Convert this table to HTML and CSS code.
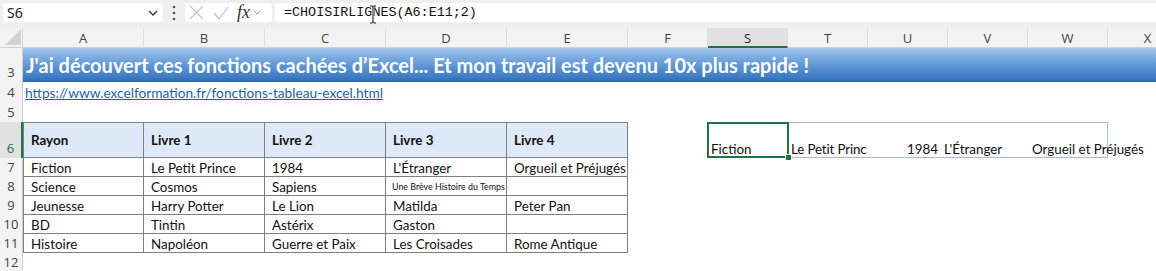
FILE: index.html
```html
<!DOCTYPE html>
<html lang="fr">
<head>
<meta charset="utf-8">
<title>Excel – CHOISIRLIGNES</title>
<link rel="stylesheet" href="styles.css">
</head>
<body>
<div class="fbar">
  <div class="namebox">
    <span class="nb-text">S6</span>
    <svg class="chev" width="10" height="6" viewBox="0 0 10 6"><path d="M1 1 L5 5 L9 1" fill="none" stroke="#333" stroke-width="1.3"/></svg>
  </div>
  <div class="dots">
    <svg width="4" height="16" viewBox="0 0 4 16"><circle cx="2" cy="2" r="1.3" fill="#555"/><circle cx="2" cy="8" r="1.3" fill="#555"/><circle cx="2" cy="14" r="1.3" fill="#555"/></svg>
  </div>
  <div class="fxbox">
    <svg class="ic-x" width="15" height="15" viewBox="0 0 15 15"><path d="M1 1 L14 14 M14 1 L1 14" stroke="#c4c4c4" stroke-width="1.2" fill="none"/></svg>
    <svg class="ic-ok" width="16" height="14" viewBox="0 0 16 14"><path d="M1 7 L6 13 L15 1" stroke="#c4c4c4" stroke-width="1.2" fill="none"/></svg>
    <span class="fx">fx</span>
    <svg class="chev-s" width="8" height="5" viewBox="0 0 8 5"><path d="M0.5 0.5 L4 4 L7.5 0.5" fill="none" stroke="#9a9a9a" stroke-width="1"/></svg>
  </div>
  <div class="formula">
    <span class="ftext">=CHOISIRLIGNES(A6:E11;2)</span>
    <svg class="ibeam" width="8" height="19" viewBox="0 0 8 19"><path d="M1 1 H3 Q4 1 4 2.5 Q4 1 5 1 H7 M4 2.5 V16.5 M1 18 H3 Q4 18 4 16.5 Q4 18 5 18 H7" fill="none" stroke="#fff" stroke-width="2.6"/><path d="M1 1 H3 Q4 1 4 2.5 Q4 1 5 1 H7 M4 2.5 V16.5 M1 18 H3 Q4 18 4 16.5 Q4 18 5 18 H7" fill="none" stroke="#111" stroke-width="1"/></svg>
  </div>
</div>

<div class="sheet">
  <div class="corner"><svg width="16" height="16" viewBox="0 0 16 16"><path d="M16 0 L16 16 L0 16 Z" fill="#d3d3d3"/></svg></div>
  <div class="ch">A</div>
  <div class="ch">B</div>
  <div class="ch">C</div>
  <div class="ch">D</div>
  <div class="ch">E</div>
  <div class="ch">F</div>
  <div class="ch ch-sel">S</div>
  <div class="ch">T</div>
  <div class="ch">U</div>
  <div class="ch">V</div>
  <div class="ch">W</div>
  <div class="ch">X</div>

  <div class="rh">3</div>
  <div class="title">J'ai découvert ces fonctions cachées d’Excel... Et mon travail est devenu 10x plus rapide !</div>

  <div class="rh">4</div>
  <div class="linkcell"><a class="link" href="#">https://www.excelformation.fr/fonctions-tableau-excel.html</a></div>

  <div class="rh">5</div>
  <div class="blank"></div>

  <div class="rh rh-sel">6</div>
  <div class="th first">Rayon</div>
  <div class="th">Livre 1</div>
  <div class="th">Livre 2</div>
  <div class="th">Livre 3</div>
  <div class="th">Livre 4</div>
  <div class="cell"></div>
  <div class="spill">
    <div class="sc sc-active"><span>Fiction</span></div>
    <div class="sc sc-clip"><span>Le Petit Princ</span></div>
    <div class="sc sc-num"><span>1984</span></div>
    <div class="sc sc-shift"><span>L'Étranger</span></div>
    <div class="sc"><span>Orgueil et Préjugés</span></div>
  </div>
  <div class="cell"></div>

  <div class="rh">7</div>
  <div class="td first">Fiction</div>
  <div class="td">Le Petit Prince</div>
  <div class="td">1984</div>
  <div class="td">L'Étranger</div>
  <div class="td">Orgueil et Préjugés</div>
  <div class="rest"></div>

  <div class="rh">8</div>
  <div class="td first">Science</div>
  <div class="td">Cosmos</div>
  <div class="td">Sapiens</div>
  <div class="td td-small">Une Brève Histoire du Temps</div>
  <div class="td"></div>
  <div class="rest"></div>

  <div class="rh">9</div>
  <div class="td first">Jeunesse</div>
  <div class="td">Harry Potter</div>
  <div class="td">Le Lion</div>
  <div class="td">Matilda</div>
  <div class="td">Peter Pan</div>
  <div class="rest"></div>

  <div class="rh">10</div>
  <div class="td first">BD</div>
  <div class="td">Tintin</div>
  <div class="td">Astérix</div>
  <div class="td">Gaston</div>
  <div class="td"></div>
  <div class="rest"></div>

  <div class="rh">11</div>
  <div class="td first">Histoire</div>
  <div class="td">Napoléon</div>
  <div class="td">Guerre et Paix</div>
  <div class="td">Les Croisades</div>
  <div class="td">Rome Antique</div>
  <div class="rest"></div>

  <div class="rh">12</div>
  <div class="blank"></div>
</div>
</body>
</html>
```
FILE: styles.css
```css
html, body {
  margin: 0;
  padding: 0;
}
body {
  width: 1156px;
  height: 271px;
  overflow: hidden;
  background: #ffffff;
  font-family: Lato, "Liberation Sans", sans-serif;
  color: #111;
}

/* ---------- formula bar ---------- */
.fbar {
  height: 28px;
  box-sizing: border-box;
  padding-top: 3px;
  background: #efefef;
  display: flex;
  align-items: flex-start;
}
.namebox {
  margin-left: 3px;
  width: 160px;
  height: 19px;
  box-sizing: border-box;
  background: #fff;
  border-radius: 3px;
  display: flex;
  align-items: center;
  justify-content: space-between;
  padding: 0 5px 0 4px;
}
.nb-text {
  font-family: "Noto Sans", "Open Sans", sans-serif;
  font-size: 14px;
  color: #222;
}
.dots {
  width: 22px;
  height: 19px;
  display: flex;
  align-items: center;
  justify-content: center;
}
.fxbox {
  width: 87px;
  height: 19px;
  box-sizing: border-box;
  background: #fff;
  border-radius: 3px;
  display: flex;
  align-items: center;
  padding-left: 4px;
}
.ic-x { margin-right: 9px; }
.ic-ok { margin-right: 8px; }
.fx {
  font-family: "Liberation Serif", serif;
  font-style: italic;
  font-size: 18px;
  color: #333;
  line-height: 19px;
  margin-right: 3px;
}
.formula {
  position: relative;
  margin-left: 3px;
  flex: 1;
  height: 19px;
  background: #fff;
  border-radius: 3px 0 0 3px;
  padding-left: 9px;
  display: flex;
  align-items: center;
}
.ftext {
  font-family: "Liberation Mono", "DejaVu Sans Mono", monospace;
  font-size: 13.4px;
  color: #111;
}
.ibeam {
  position: absolute;
  left: 94px;
  top: 2px;
}

/* ---------- sheet grid ---------- */
.sheet {
  display: grid;
  grid-template-columns: 23px repeat(5, 121px) repeat(7, 80px);
  grid-template-rows: 20px 34px 20px 20px 36px repeat(6, 19px);
}
.corner {
  background: #f3f3f3;
  border-right: 1px solid #d4d4d4;
  border-bottom: 1px solid #cfcfcf;
  box-sizing: border-box;
  display: flex;
  align-items: flex-end;
  justify-content: flex-end;
  padding: 0 1px 2px 0;
}
.ch {
  background: #f3f3f3;
  border-right: 1px solid #dcdcdc;
  border-bottom: 1px solid #cfcfcf;
  box-sizing: border-box;
  font-family: "Open Sans", "Noto Sans", sans-serif;
  font-size: 13px;
  color: #444;
  text-align: center;
  line-height: 20px;
}
.ch-sel {
  background: #e1e1e1;
  border-bottom: 2px solid #217346;
  color: #222;
}
.rh {
  background: #f3f3f3;
  border-right: 1px solid #cfcfcf;
  box-sizing: border-box;
  font-family: "Open Sans", "Noto Sans", sans-serif;
  font-size: 13px;
  color: #444;
  display: flex;
  align-items: flex-end;
  justify-content: center;
  padding-bottom: 1px;
  line-height: 17px;
}
.rh-sel {
  background: #e1e1e1;
  border-right: 2px solid #217346;
  color: #217346;
}

.title {
  grid-column: 2 / -1;
  background: linear-gradient(180deg, #a9c7ea 0%, #7eaee2 25%, #5b93d4 55%, #3e7cc6 85%, #2f6bb3 100%);
  color: #fff;
  font-weight: 700;
  font-size: 20px;
  padding-left: 3px;
  display: flex;
  align-items: center;
  white-space: nowrap;
  padding-bottom: 1px;
}
.linkcell {
  grid-column: 2 / -1;
  padding-left: 2px;
  display: flex;
  align-items: flex-end;
}
.link {
  color: #1a5fb4;
  text-decoration: underline;
  font-size: 13.7px;
  line-height: 18px;
}
.blank {
  grid-column: 2 / -1;
}
.rest {
  grid-column: 7 / -1;
}

/* ---------- table ---------- */
.th, .td {
  box-sizing: border-box;
  border-right: 1px solid #7f7f7f;
  border-bottom: 1px solid #7f7f7f;
  padding-left: 7px;
  font-size: 13.4px;
  white-space: nowrap;
  overflow: hidden;
  display: flex;
  align-items: center;
  color: #111;
}
.th {
  background: #dde9f6;
  border-top: 1px solid #7f7f7f;
  font-weight: 700;
}
.td {
  padding-top: 1px;
}
.first {
  border-left: 1px solid #7f7f7f;
}
.td-small {
  font-size: 8.9px;
  padding-left: 6px;
}

/* ---------- spill range ---------- */
.spill {
  grid-column: 8 / 13;
  display: flex;
  box-shadow: inset 0 0 0 1px #a7b9dd;
}
.sc {
  flex: none;
  width: 80px;
  box-sizing: border-box;
  display: flex;
  align-items: flex-end;
  padding-left: 4px;
  padding-bottom: 0;
  font-size: 13.4px;
  line-height: 18px;
  white-space: nowrap;
}
.sc-active {
  position: relative;
  background: #fff;
  box-shadow: inset 0 0 0 2px #217346;
  margin-left: -1px;
  width: 82px;
}
.sc-active::after {
  content: "";
  position: absolute;
  right: -3px;
  bottom: -3px;
  width: 5px;
  height: 5px;
  background: #217346;
  border: 1px solid #fff;
}
.sc-clip {
  width: 79px;
  overflow: hidden;
  padding-left: 2px;
  letter-spacing: -0.15px;
}
.sc-num {
  justify-content: flex-end;
  padding-right: 10px;
}
.sc-shift span {
  margin-left: -8px;
}
```
